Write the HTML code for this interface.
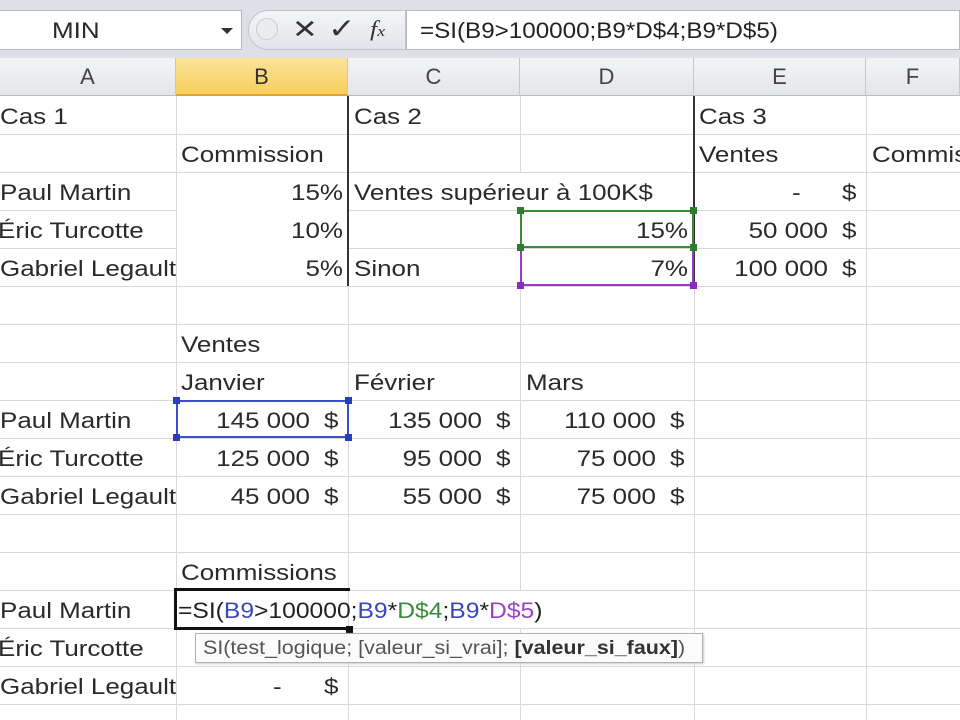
<!DOCTYPE html>
<html><head><meta charset="utf-8"><style>
*{margin:0;padding:0;box-sizing:border-box}
body{width:960px;height:720px;overflow:hidden;background:#fff;font-family:"Liberation Sans","DejaVu Sans",sans-serif;color:#2a2a2a;position:relative}
.a{position:absolute;white-space:nowrap;font-size:22px;line-height:38px;margin-top:2px;transform:scaleX(1.18);transform-origin:left center}
.r{text-align:right;transform-origin:right center}
.vl{position:absolute;top:96px;bottom:0;width:1px;background:#d9d9d9}
.hl{position:absolute;left:0;right:0;height:1px;background:#d9d9d9}
.hd{position:absolute;top:58px;height:38px;font-size:22px;line-height:38px;text-align:center;color:#444;background:linear-gradient(#f3f4f6,#e3e5e9);border-right:1px solid #c4c7cc;border-bottom:1px solid #b8bcc2}
.h{position:absolute;width:7px;height:7px}
</style></head><body>
<div style="position:absolute;left:0;top:0;width:960px;height:58px;background:#dde1e7"></div>
<div style="position:absolute;left:0;top:10px;width:242px;height:40px;background:#fff;border:1px solid #b5bac2;border-left:none"></div>
<div class="a" style="left:52px;top:10px">MIN</div>
<div style="position:absolute;left:221px;top:28px;border:6px solid transparent;border-top:6px solid #333"></div>
<div style="position:absolute;left:248px;top:10px;width:158px;height:40px;background:linear-gradient(#f4f5f7,#e2e5ea);border-radius:20px 0 0 20px;border:1px solid #c0c4ca"></div>
<div style="position:absolute;left:256px;top:18px;width:22px;height:22px;border-radius:50%;background:#eaecef;border:1px solid #ccc"></div>
<div class="a" style="left:292px;top:8px;font-size:26px;color:#333">✕</div>
<div class="a" style="left:328px;top:8px;font-size:28px;color:#333">✓</div>
<div class="a" style="left:370px;top:8px;font-size:22px;font-style:italic;font-family:'Liberation Serif',serif;color:#333">f<span style="font-size:15px">x</span></div>
<div style="position:absolute;left:406px;top:10px;width:554px;height:40px;background:#fff;border:1px solid #b5bac2"></div>
<div class="a" style="left:420px;top:10px;color:#222;transform:scaleX(1.1)">=SI(B9&gt;100000;B9*D$4;B9*D$5)</div>

<div class="hd" style="left:0;width:176px">A</div>
<div class="hd" style="left:176px;width:172px;background:linear-gradient(#fbe49a,#f6cf5c);border-bottom:2px solid #e2a530;color:#333">B</div>
<div class="hd" style="left:348px;width:172px">C</div>
<div class="hd" style="left:520px;width:174px">D</div>
<div class="hd" style="left:694px;width:172px">E</div>
<div class="hd" style="left:866px;width:94px">F</div>

<div class="vl" style="left:176px"></div><div class="vl" style="left:348px"></div><div class="vl" style="left:520px"></div><div class="vl" style="left:694px"></div><div class="vl" style="left:866px"></div>
<div class="hl" style="top:134px"></div><div class="hl" style="top:172px"></div><div class="hl" style="top:210px"></div><div class="hl" style="top:248px"></div><div class="hl" style="top:286px"></div><div class="hl" style="top:324px"></div><div class="hl" style="top:362px"></div><div class="hl" style="top:400px"></div><div class="hl" style="top:438px"></div><div class="hl" style="top:476px"></div><div class="hl" style="top:514px"></div><div class="hl" style="top:552px"></div><div class="hl" style="top:590px"></div><div class="hl" style="top:628px"></div><div class="hl" style="top:666px"></div><div class="hl" style="top:704px"></div>
<div style="position:absolute;left:177px;top:173px;width:171px;height:113px;background:#fff"></div>
<div style="position:absolute;left:349px;top:173px;width:345px;height:37px;background:#fff"></div>
<div style="position:absolute;left:347px;top:96px;width:2px;height:190px;background:#333"></div>
<div style="position:absolute;left:693px;top:96px;width:2px;height:190px;background:#333"></div>

<div class="a" style="left:0;top:96px">Cas 1</div>
<div class="a" style="left:354px;top:96px">Cas 2</div>
<div class="a" style="left:699px;top:96px">Cas 3</div>
<div class="a" style="left:181px;top:134px">Commission</div>
<div class="a" style="left:699px;top:134px">Ventes</div>
<div class="a" style="left:872px;top:134px">Commis</div>
<div class="a" style="left:0;top:172px">Paul Martin</div>
<div class="a r" style="left:176px;width:167px;top:172px">15%</div>
<div class="a" style="left:354px;top:172px">Ventes supérieur à 100K$</div>
<div class="a" style="left:792px;top:172px">-</div><div class="a" style="left:842px;top:172px">$</div>
<div class="a" style="left:-2px;top:210px">Éric Turcotte</div>
<div class="a r" style="left:176px;width:167px;top:210px">10%</div>
<div class="a r" style="left:520px;width:168px;top:210px">15%</div>
<div class="a r" style="left:694px;width:134px;top:210px">50 000</div><div class="a" style="left:842px;top:210px">$</div>
<div class="a" style="left:0;top:248px">Gabriel Legault</div>
<div class="a r" style="left:176px;width:167px;top:248px">5%</div>
<div class="a" style="left:354px;top:248px">Sinon</div>
<div class="a r" style="left:520px;width:168px;top:248px">7%</div>
<div class="a r" style="left:694px;width:134px;top:248px">100 000</div><div class="a" style="left:842px;top:248px">$</div>

<div style="position:absolute;left:520px;top:210px;width:174px;height:38px;border:2px solid #3a8a3a"></div>
<div style="position:absolute;left:520px;top:248px;width:174px;height:38px;border:2px solid #9a3cc0;border-top:none"></div>
<div class="h" style="left:517px;top:207px;background:#2e7d2e"></div><div class="h" style="left:690px;top:207px;background:#2e7d2e"></div>
<div class="h" style="left:517px;top:244px;background:#2e7d2e"></div><div class="h" style="left:690px;top:244px;background:#2e7d2e"></div>
<div class="h" style="left:517px;top:282px;background:#8a2cc0"></div><div class="h" style="left:690px;top:282px;background:#8a2cc0"></div>

<div class="a" style="left:181px;top:324px">Ventes</div>
<div class="a" style="left:181px;top:362px">Janvier</div>
<div class="a" style="left:354px;top:362px">Février</div>
<div class="a" style="left:526px;top:362px">Mars</div>

<div class="a" style="left:0;top:400px">Paul Martin</div>
<div class="a" style="left:-2px;top:438px">Éric Turcotte</div>
<div class="a" style="left:0;top:476px">Gabriel Legault</div>
<div class="a r" style="left:176px;width:134px;top:400px">145 000</div><div class="a" style="left:324px;top:400px">$</div>
<div class="a r" style="left:176px;width:134px;top:438px">125 000</div><div class="a" style="left:324px;top:438px">$</div>
<div class="a r" style="left:176px;width:134px;top:476px">45 000</div><div class="a" style="left:324px;top:476px">$</div>
<div class="a r" style="left:348px;width:134px;top:400px">135 000</div><div class="a" style="left:496px;top:400px">$</div>
<div class="a r" style="left:348px;width:134px;top:438px">95 000</div><div class="a" style="left:496px;top:438px">$</div>
<div class="a r" style="left:348px;width:134px;top:476px">55 000</div><div class="a" style="left:496px;top:476px">$</div>
<div class="a r" style="left:520px;width:136px;top:400px">110 000</div><div class="a" style="left:670px;top:400px">$</div>
<div class="a r" style="left:520px;width:136px;top:438px">75 000</div><div class="a" style="left:670px;top:438px">$</div>
<div class="a r" style="left:520px;width:136px;top:476px">75 000</div><div class="a" style="left:670px;top:476px">$</div>
<div style="position:absolute;left:176px;top:400px;width:173px;height:38px;border:2px solid #3b4fd0"></div>
<div class="h" style="left:173px;top:397px;background:#2a3cc0"></div><div class="h" style="left:345px;top:397px;background:#2a3cc0"></div>
<div class="h" style="left:173px;top:434px;background:#2a3cc0"></div><div class="h" style="left:345px;top:434px;background:#2a3cc0"></div>

<div class="a" style="left:181px;top:552px">Commissions</div>
<div class="a" style="left:0;top:590px">Paul Martin</div>
<div class="a" style="left:-2px;top:628px">Éric Turcotte</div>
<div class="a" style="left:0;top:666px">Gabriel Legault</div>
<div style="position:absolute;left:349px;top:591px;width:200px;height:37px;background:#fff"></div>
<div style="position:absolute;left:174px;top:588px;width:176px;height:42px;border:3px solid #111;border-right:none"></div>
<div style="position:absolute;left:346px;top:626px;width:7px;height:7px;background:#111"></div>
<div class="a" style="left:178px;top:590px;color:#222;transform:scaleX(1.12)">=SI(<span style="color:#3b48b8">B9</span>&gt;100000;<span style="color:#3b48b8">B9</span>*<span style="color:#3a8a3a">D$4</span>;<span style="color:#3b48b8">B9</span>*<span style="color:#a040c0">D$5</span>)</div>
<div style="position:absolute;left:195px;top:633px;width:508px;height:30px;background:#fbfbfb;border:1px solid #b0b0b0;box-shadow:1px 1px 2px #ccc"></div>
<div class="a" style="left:203px;top:629px;font-size:19px;line-height:36px;color:#555;transform:scaleX(1.13)">SI(test_logique; [valeur_si_vrai]; <b style="color:#333">[valeur_si_faux]</b>)</div>
<div class="a" style="left:273px;top:666px">-</div><div class="a" style="left:324px;top:666px">$</div>
</body></html>
